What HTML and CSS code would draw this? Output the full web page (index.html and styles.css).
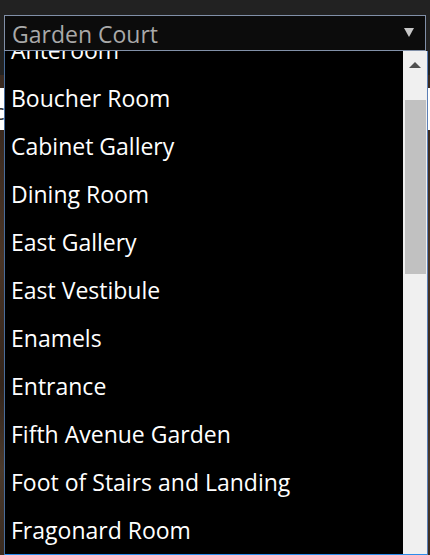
FILE: index.html
```html
<!DOCTYPE html>
<html>
<head>
<meta charset="utf-8">
<link rel="stylesheet" href="styles.css">
</head>
<body>
<div class="page">
  <div class="backdrop">
    <div class="bd-top"></div>
    <div class="bd-wood"></div>
    <div class="bd-white"><span class="bd-c">c</span></div>
    <div class="bd-wood2"></div>
  </div>
  <div class="overlay">
    <div class="select">
      <span class="select-value">Garden Court</span>
      <span class="select-arrow"></span>
    </div>
    <div class="list">
      <div class="options">
        <div class="opt-track">
          <div class="opt">Anteroom</div>
          <div class="opt">Boucher Room</div>
          <div class="opt">Cabinet Gallery</div>
          <div class="opt">Dining Room</div>
          <div class="opt">East Gallery</div>
          <div class="opt">East Vestibule</div>
          <div class="opt">Enamels</div>
          <div class="opt">Entrance</div>
          <div class="opt">Fifth Avenue Garden</div>
          <div class="opt">Foot of Stairs and Landing</div>
          <div class="opt">Fragonard Room</div>
        </div>
      </div>
      <div class="scrollbar">
        <div class="sb-up"></div>
        <div class="sb-thumb"></div>
      </div>
    </div>
  </div>
</div>
</body>
</html>
```
FILE: styles.css
```css
html, body {
  margin: 0;
  padding: 0;
  width: 430px;
  height: 555px;
  overflow: hidden;
  background: #222222;
}
.page {
  position: relative;
  width: 430px;
  height: 555px;
  font-family: "Open Sans", "Noto Sans", sans-serif;
}
.backdrop {
  position: absolute;
  inset: 0;
  display: flex;
  flex-direction: column;
}
.bd-top {
  height: 75px;
  background: #222222;
}
.bd-wood {
  height: 13px;
  background: #3a2a20;
}
.bd-white {
  height: 42px;
  background: #ffffff;
  position: relative;
  overflow: hidden;
}
.bd-c {
  position: absolute;
  left: -6px;
  top: 8px;
  font-size: 22px;
  color: #333;
}
.bd-wood2 {
  flex: 1;
  background: linear-gradient(180deg, #3b2a1f 0%, #4a3526 30%, #34251b 60%, #4b3a2c 80%, #3a2b20 100%);
}
.overlay {
  position: relative;
  padding-top: 15px;
  padding-left: 4px;
  width: 424px;
}
.select {
  height: 34px;
  border: 1px solid #8190a8;
  background: #0c0c0c;
  display: flex;
  align-items: center;
  justify-content: space-between;
  padding: 0 11px 0 7px;
  margin-right: 2px;
}
.select-value {
  color: #a9a9a9;
  font-size: 23px;
  line-height: 34px;
  padding-top: 2px;
}
.select-arrow {
  width: 0;
  height: 0;
  border-left: 5px solid transparent;
  border-right: 5px solid transparent;
  border-top: 9px solid #c8c8c8;
  margin-top: -2px;
}
.list {
  height: 503px;
  display: flex;
  border-left: 1px solid #4a6d9a;
  border-right: 1px solid #5b7fb5;
  border-bottom: 2px solid #2d8ceb;
  background: #000000;
}
.options {
  flex: 1;
  overflow: hidden;
}
.opt-track {
  margin-top: -25px;
}
.opt {
  height: 48px;
  line-height: 48px;
  padding-left: 6px;
  color: #ffffff;
  font-size: 23px;
  white-space: nowrap;
}
.scrollbar {
  width: 24px;
  background: #f0f0f0;
  display: flex;
  flex-direction: column;
  align-items: center;
}
.sb-up {
  margin-top: 11px;
  width: 0;
  height: 0;
  border-left: 6px solid transparent;
  border-right: 6px solid transparent;
  border-bottom: 6px solid #505050;
}
.sb-thumb {
  margin-top: 32px;
  width: 21px;
  height: 174px;
  background: #c1c1c1;
}
```
